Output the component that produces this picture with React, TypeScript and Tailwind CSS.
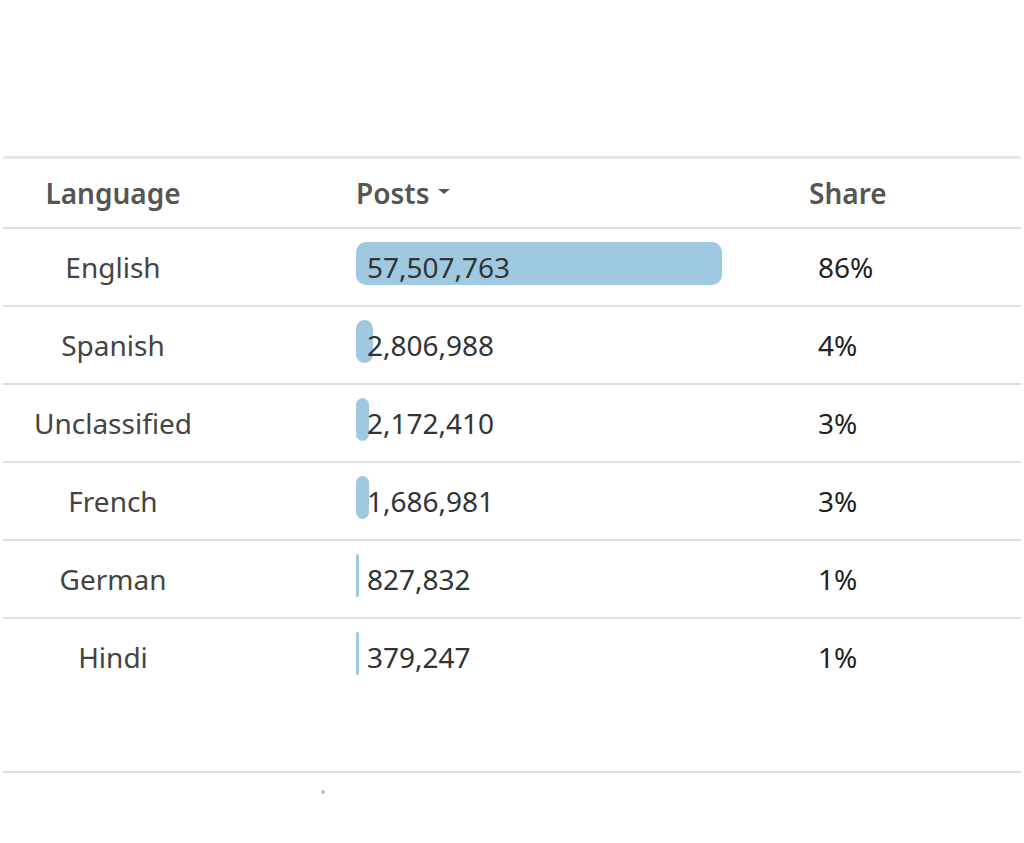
import { FC } from 'react';

type Row = { language: string; posts: string; share: string; bar: number };

const rows: Row[] = [
  { language: 'English', posts: '57,507,763', share: '86%', bar: 366 },
  { language: 'Spanish', posts: '2,806,988', share: '4%', bar: 17 },
  { language: 'Unclassified', posts: '2,172,410', share: '3%', bar: 13 },
  { language: 'French', posts: '1,686,981', share: '3%', bar: 13 },
  { language: 'German', posts: '827,832', share: '1%', bar: 3 },
  { language: 'Hindi', posts: '379,247', share: '1%', bar: 3 },
];

const App: FC = () => {
  return (
    <div className="h-[843px] w-[1024px] bg-white font-['Noto_Sans','Open_Sans',sans-serif]">
      <div className="h-[156px]" />

      <div className="mx-[3px] border-t-[3px] border-[#e6e6e6]">
        {/* HEADER */}
        <div className="flex h-[68px] items-center text-[28px] font-semibold text-[#555]">
          <div className="w-[220px] text-center">Language</div>
          <div className="ml-[133px] flex w-[414px] items-center gap-[9px]">
            Posts
            <span className="mt-[-4px] h-0 w-0 border-x-[6px] border-t-[5px] border-x-transparent border-t-[#555]" />
          </div>
          <div className="w-[156px] pl-[39px]">Share</div>
        </div>

        {/* ROWS */}
        {rows.map(({ language, posts, share, bar }) => (
          <div
            key={language}
            className="flex h-[78px] items-center border-t-2 border-[#dedede] text-[28px] text-[#444]"
          >
            <div className="w-[220px] text-center">{language}</div>
            <div className="relative ml-[133px] flex h-[43px] w-[414px] items-center">
              <span
                className="absolute left-0 top-[-4px] h-full bg-[#9fc9e0]"
                style={{ width: bar, borderRadius: bar < 6 ? 2 : 10 }}
              />
              <span className="relative pl-[11px] text-[#333]">{posts}</span>
            </div>
            <div className="w-[156px] pl-[48px] text-[#222]">{share}</div>
          </div>
        ))}

        <div className="h-[76px]" />

        {/* FOOTER */}
        <div className="border-t-2 border-[#dedede]">
          <div className="ml-[318px] mt-[17px] h-[4px] w-[4px] rounded-full bg-[#9fc9e0]" />
        </div>
      </div>
    </div>
  );
};

export default App;
